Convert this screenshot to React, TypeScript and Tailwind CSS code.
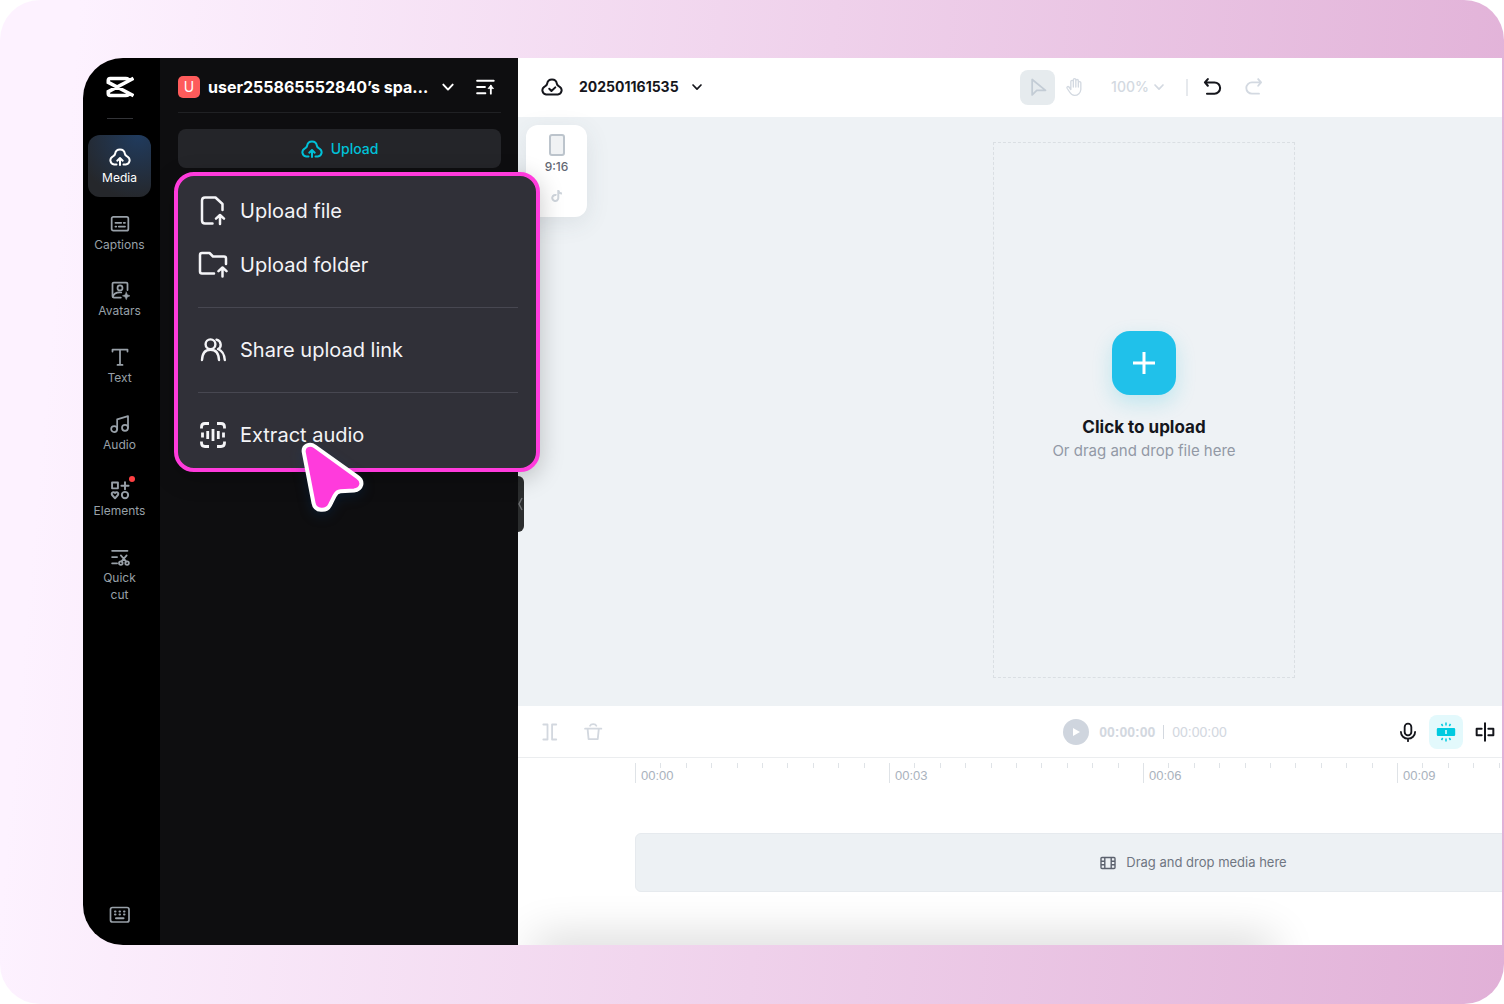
import type { ReactNode } from "react";

type IconProps = { className?: string };

function Stroke({ className = "size-5", box = 24, width = 2.1, children }: IconProps & { box?: number; width?: number; children: ReactNode }) {
  return (
    <svg
      aria-hidden="true"
      viewBox={`0 0 ${box} ${box}`}
      className={className}
      fill="none"
      stroke="currentColor"
      strokeWidth={width}
      strokeLinecap="round"
      strokeLinejoin="round"
    >
      {children}
    </svg>
  );
}

const CLOUD = "C4.6 10.7 6.6 10.6 6.7 8.3a5.4 5.4 0 0 1 10.6 0C17.4 10.6 19.4 10.7 20.4 11.8";

const CloudUpload = ({ className }: IconProps) => (
  <Stroke className={className} width={2.2}>
    <path d={`M8.2 20.2H5.6A4.6 4.6 0 0 1 3.6 11.8${CLOUD}A4.6 4.6 0 0 1 18.4 20.2H15.8`} />
    <path d="M12 20.8v-7.3M9 16l3-2.8 3 2.8" />
  </Stroke>
);

const CloudCheck = ({ className }: IconProps) => (
  <Stroke className={className} width={2.2}>
    <path d={`M5.6 20.2A4.6 4.6 0 0 1 3.6 11.8${CLOUD}A4.6 4.6 0 0 1 18.4 20.2Z`} />
    <path d="M9 14l2.4 2.4 4.2-4" />
  </Stroke>
);

const Captions = () => (
  <Stroke>
    <rect x="2" y="3.5" width="20" height="16.5" rx="2" />
    <path d="M6.5 10.5h7M16.5 10.5h1.5M6.5 15h1M10.5 15H18" />
  </Stroke>
);

const Avatars = () => (
  <Stroke>
    <path d="M21 12V4.5A1.5 1.5 0 0 0 19.5 3h-15A1.5 1.5 0 0 0 3 4.5v15A1.5 1.5 0 0 0 4.5 21H13" />
    <circle cx="12" cy="9.5" r="3" />
    <path d="M3.5 20c1-4 4.5-5.5 10-5" />
    <path d="M19.5 14.3l1.4 3.300 3.300 1.400-3.300 1.400-1.400 3.300-1.400-3.300-3.300-1.400 3.300-1.400z" fill="currentColor" strokeWidth=".5" />
  </Stroke>
);

const TextT = () => (
  <Stroke>
    <path d="M3 5.5V3h18v2.500M12 3v18.500M9 21.500h6" />
  </Stroke>
);

const Audio = () => (
  <Stroke>
    <circle cx="5" cy="18" r="3.6" />
    <circle cx="18" cy="16.5" r="3.6" />
    <path d="M8.6 18V6.500L21.600 2.500v14" />
  </Stroke>
);

const Elements = () => (
  <Stroke width={2.3}>
    <rect x="2.5" y="3" width="7" height="7" />
    <path d="M18 2.500v8.500M13.700 6.800h8.600" />
    <circle cx="18" cy="18" r="3.800" />
    <path d="M6 22l-3.500-4c-1.500-3 2-4.500 3.500-2.300 1.500-2.200 5-.7 3.500 2.300z" />
  </Stroke>
);

const QuickCut = () => (
  <Stroke>
    <path d="M2.500 4.500h18.500M2.500 12h6M2.500 19.500h6M13 10l6.500 7.500M20 10l-6.500 7.500" />
    <circle cx="13" cy="19.300" r="2.200" />
    <circle cx="20.500" cy="19.300" r="2.200" />
  </Stroke>
);

const Keyboard = () => (
  <Stroke className="size-6" width={1.7}>
    <rect x="2.500" y="4.500" width="18.500" height="14.500" rx="2" />
    <path d="M7 8.500h.5M11.500 8.500h.5M16 8.500h.5M7 11.500h.5M11.500 11.500h.5M16 11.500h.5M8 15.300h7.500" strokeWidth="2" />
  </Stroke>
);

const Chevron = ({ className = "size-3" }: IconProps) => (
  <Stroke className={className} box={12} width={1.7}>
    <path d="M2 4l4 4.200L10 4" />
  </Stroke>
);

const SortUp = () => (
  <Stroke width={2.2}>
    <path d="M2.500 4.500h20M2.500 12h9.500M2.500 19.500h10M19 20v-9.500" />
    <path d="M16 13.500l3-3.500 3 3.500z" fill="currentColor" strokeWidth="1" />
  </Stroke>
);

const Logo = () => (
  <svg aria-label="CapCut" role="img" viewBox="0 0 28 22" className="h-[22px] w-7" fill="none" stroke="white" strokeWidth="3.600">
    <path d="M27.500 2.200 22.500 5 2.300 15.700V17.500q0 2 2 2h15.500q3 0 3-2.800M27.500 19.800 22.500 17 2.300 6.300V4.500q0-2 2-2h15.500q3 0 3 2.800" />
  </svg>
);

const FileUp = () => (
  <Stroke className="size-[30px]" box={30} width={2.5}>
    <path d="M14.500 27.500H7q-3 0-3-3v-20q0-3 3-3h10.500l7 6.500V14" />
    <path d="M22 28v-8.500M18 22.700l4-3.700 4 3.700" />
  </Stroke>
);

const FolderUp = () => (
  <Stroke className="size-[30px]" box={30} width={2.5}>
    <path d="M16 23.500H4q-2 0-2-2V5q0-2 2-2h7.500l3.500 3.500h11q2 0 2 2V14" />
    <path d="M24.500 26.500V18M20.500 21.200l4-3.700 4 3.700" />
  </Stroke>
);

const Users = () => (
  <Stroke className="size-[30px]" box={30} width={2.4}>
    <circle cx="12.500" cy="9.300" r="4.900" />
    <path d="M4 25c.3-7 3.500-10.300 8.500-10.300S20.700 18 21 25M18.500 4.700c5.300 1.600 5.300 7.600 1.500 9.300 4 1.500 6.300 5 6.800 11" />
  </Stroke>
);

const ExtractAudio = () => (
  <Stroke className="size-[30px]" box={30} width={2.8}>
    <path d="M3.500 8.500V7q0-3.500 3.500-3.500h4M19 3.500h4q3.500 0 3.500 3.500v1.500M26.500 21.500v1.500q0 3.500-3.500 3.500h-4M11 26.500H7q-3.500 0-3.500-3.500v-1.500" strokeLinecap="butt" />
    <path d="M4.500 12.500v5M9.700 11v8M15 9v12M20.300 11v8M25.500 12.500v5" strokeLinecap="butt" />
  </Stroke>
);

const navItems: { label: string; icon: ReactNode; dot?: boolean }[] = [
  { label: "Media", icon: <CloudUpload className="size-[22px]" /> },
  { label: "Captions", icon: <Captions /> },
  { label: "Avatars", icon: <Avatars /> },
  { label: "Text", icon: <TextT /> },
  { label: "Audio", icon: <Audio /> },
  { label: "Elements", icon: <Elements />, dot: true },
  { label: "Quick cut", icon: <QuickCut /> },
];

function Sidebar() {
  return (
    <nav aria-label="Tools" className="flex w-[77px] shrink-0 flex-col items-center bg-black pt-[18px] pr-1 pb-[18px] text-[#98a0a8]">
      <Logo />
      <div className="mt-5 h-px w-[26px] bg-[#333438]" />
      <ul className="mt-4 flex h-[468px] flex-col justify-between">
        {navItems.map((item, i) => (
          <li key={item.label}>
            <button
              className={
                i === 0
                  ? "flex h-[62px] w-[63px] flex-col items-center rounded-xl bg-[radial-gradient(circle_at_80%_0%,#203b5e,#25272b_80%)] pt-[11px] text-white"
                  : "relative flex min-h-[62px] w-[63px] flex-col items-center pt-[11px]"
              }
            >
              <span className="flex h-[22px] items-center">{item.icon}</span>
              {item.dot && <span className="absolute top-2 right-4 size-1.5 rounded-full bg-[#ff4043]" />}
              <span className={item.label === "Quick cut" ? "mt-px w-10 text-xs leading-[17px]" : "mt-px text-xs leading-[18px]"}>{item.label}</span>
            </button>
          </li>
        ))}
      </ul>
      <button aria-label="Keyboard shortcuts" className="mt-auto">
        <Keyboard />
      </button>
    </nav>
  );
}

function MenuItem({ icon, children }: { icon: ReactNode; children: ReactNode }) {
  return (
    <button role="menuitem" className="flex h-[54px] w-full items-center gap-3 text-xl text-[#f4f4f7]">
      {icon}
      <span>{children}</span>
    </button>
  );
}

function UploadMenu() {
  return (
    <div role="menu" className="absolute top-[114px] left-[14px] z-20 w-[366px] rounded-[20px] border-4 border-[#ff3bdc] bg-[#303038] pt-2 pr-[18px] pb-1.5 pl-5 shadow-[0_6px_24px_rgba(0,0,0,0.22)]">
      <MenuItem icon={<FileUp />}>Upload file</MenuItem>
      <MenuItem icon={<FolderUp />}>Upload folder</MenuItem>
      <hr className="my-[15px] border-[#474751]" />
      <MenuItem icon={<Users />}>Share upload link</MenuItem>
      <hr className="my-[15px] border-[#474751]" />
      <MenuItem icon={<ExtractAudio />}>Extract audio</MenuItem>
      <svg aria-hidden="true" viewBox="0 0 66 76" className="absolute top-[264px] left-[122px] h-[76px] w-[66px] drop-shadow-[0_4px_6px_rgba(0,60,120,0.25)]">
        <path
          d="M15 6.500C9.500 2.500 2.600 6 3.800 12.500L13.500 63C15 71.500 26.500 72 30 65L34.500 56C36 53 37.500 51.500 40.500 51.300L54 50.500C62 49.500 64 41.500 57.500 37Z"
          fill="#ff3bdc"
          stroke="white"
          strokeWidth="4"
          strokeLinejoin="round"
        />
      </svg>
    </div>
  );
}

function MediaPanel() {
  return (
    <section aria-label="Media" className="relative z-10 w-[358px] shrink-0 bg-[#0e0e10] pr-[17px] pl-[18px] text-white">
      <header className="flex h-[55px] items-center border-b border-[#202124] pt-[3px]">
        <button className="flex min-w-0 flex-1 items-center gap-2">
          <span className="flex h-[22px] w-[22px] shrink-0 items-center justify-center rounded-[5px] bg-[#fe5b5b] text-sm">U</span>
          <span className="w-[222px] truncate text-left text-base font-bold">user255865552840’s space</span>
          <Chevron className="ml-[3px] size-3.5" />
        </button>
        <button aria-label="Sort" className="mr-1.5">
          <SortUp />
        </button>
      </header>
      <button className="mt-4 flex h-[39px] w-full items-center justify-center gap-2 rounded-lg bg-[#242529] text-sm font-medium text-[#00c1d8]">
        <CloudUpload className="size-[22px]" />
        Upload
      </button>
      <UploadMenu />
      <button aria-label="Collapse panel" className="absolute top-[418px] -right-1.5 flex h-14 w-1.5 items-center justify-center rounded-r-lg bg-[#2b2d2e] text-[#6c6e70]">
        <svg aria-hidden="true" viewBox="0 0 6 14" className="h-3.5 w-1.5 shrink-0" fill="none" stroke="currentColor" strokeWidth="1.500">
          <path d="M4 1 1 7l3 6" />
        </svg>
      </button>
    </section>
  );
}

function TopBar() {
  return (
    <header className="grid h-[59px] shrink-0 grid-cols-[1fr_auto_1fr] items-center bg-white pb-px text-[#15161c]">
      <div className="flex items-center gap-4 pl-[23px]">
        <CloudCheck className="size-[22px]" />
        <button className="flex items-center gap-3 text-sm font-bold">
          202501161535
          <Chevron />
        </button>
      </div>
      <div className="flex items-center pr-1 text-[#d3d9e1]">
        <button aria-label="Select" className="flex size-[35px] items-center justify-center rounded-lg bg-[#e6ebee] text-[#c3ccd5]">
          <Stroke>
            <path d="M5 3v18.500l5.500-5.500h10.500z" />
          </Stroke>
        </button>
        <button aria-label="Pan" className="ml-2.5">
          <Stroke width={1.6}>
            <path d="M7 15V5.500a1.500 1.500 0 0 1 3 0V12V3.500a1.500 1.500 0 0 1 3 0V12V4.500a1.500 1.500 0 0 1 3 0V12V7a1.500 1.500 0 0 1 3 0v8a7.500 7.500 0 0 1-7.500 7c-3 0-4.500-1.500-6-4l-3-4.500c-.8-1.500 1-2.800 2.300-1.500L7 15" />
          </Stroke>
        </button>
        <button className="ml-[26px] flex items-center gap-1 text-sm font-medium">
          100%
          <Chevron />
        </button>
        <span className="ml-[21px] h-[17px] w-0.5 bg-[#e6e9ed]" />
        <button aria-label="Undo" className="ml-3.5 text-[#15161c]">
          <Stroke width={2.5}>
            <path d="M7 2.500 3.500 6.500l3.500 4M4 6.500h11a6.700 6.700 0 0 1 0 13.500H6" />
          </Stroke>
        </button>
        <button aria-label="Redo" className="ml-[22px]">
          <Stroke width={2.2}>
            <path d="M17 2.500 20.500 6.500l-3.500 4M20 6.500H9.500a6.700 6.700 0 0 0 0 13.500H18" />
          </Stroke>
        </button>
      </div>
    </header>
  );
}

function Stage() {
  return (
    <div className="relative flex min-h-[588px] flex-1 justify-center bg-[#eef2f5] pt-[25px] pb-7">
      <button className="absolute top-2 left-2 flex h-[92px] w-[61px] flex-col items-center rounded-xl bg-white pt-[9px] text-[#626773] shadow-[0_6px_24px_rgba(60,80,90,0.10)]">
        <span className="h-[22px] w-4 rounded-[3px] border-2 border-[#bcc4cc] bg-[#f0f2f4]" />
        <span className="mt-[3px] text-xs leading-4 font-medium">9:16</span>
        <svg aria-hidden="true" viewBox="0 0 12 14" className="mt-[14px] h-3.5 w-3" fill="none" stroke="#cfd5dc" strokeWidth="2">
          <path d="M5.500 6.200a3 3 0 1 0 1.800 3V1M7.300 1.500c.4 2 1.700 3 3.700 3" />
        </svg>
      </button>
      <div className="flex w-[302px] flex-col items-center justify-center border border-dashed border-[#dadfe3] pb-[26px]">
        <button aria-label="Click to upload" className="flex size-16 items-center justify-center rounded-[18px] bg-[#20c1ea] text-white shadow-[0_8px_20px_rgba(32,193,220,0.22)]">
          <svg aria-hidden="true" viewBox="0 0 24 24" className="size-6" stroke="currentColor" strokeWidth="3">
            <path d="M12 1v22M1 12h22" />
          </svg>
        </button>
        <p className="mt-5 text-[17px] leading-6 font-bold text-[#15161c]">Click to upload</p>
        <p className="text-[15px] leading-6 text-[#9299a5]">Or drag and drop file here</p>
      </div>
    </div>
  );
}

function TimelineToolbar() {
  return (
    <div className="grid h-[52px] shrink-0 grid-cols-[1fr_auto_1fr] items-center border-b border-[#ebedef] text-[#d3d8df]">
      <div className="flex items-center gap-[23px] pl-[22px]">
        <button aria-label="Split">
          <Stroke width={2.2}>
            <path d="M4 3H9v18H4M19.500 3H14.500v18h5" />
          </Stroke>
        </button>
        <button aria-label="Delete">
          <Stroke width={2.2}>
            <path d="M2.500 8h19.500M5.500 8l1.200 12.500h11L19 8M8.500 4.500c1-2.500 6.500-2.500 7.500 0" />
          </Stroke>
        </button>
      </div>
      <div className="flex items-center pl-0.5 font-['Liberation_Sans',sans-serif] text-sm">
        <button aria-label="Play" className="flex size-[26px] items-center justify-center rounded-full bg-[#cfd5de]">
          <svg aria-hidden="true" viewBox="0 0 10 10" className="size-2.5 fill-white">
            <path d="M2 1l7 4-7 4z" />
          </svg>
        </button>
        <span className="ml-2.5 font-bold">00:00:00</span>
        <span className="mx-2 h-3.5 w-px bg-[#d3d8df]" />
        <span>00:00:00</span>
      </div>
      <div className="flex items-center justify-end pr-[275px] text-[#15161c]">
        <button aria-label="Record voice" className="mr-[11px]">
          <Stroke width={2.2}>
            <rect x="8" y="2" width="8" height="14" rx="4" />
            <path d="M3.500 12a8.500 8 0 0 0 17 0M12 20v3" />
          </Stroke>
        </button>
        <button aria-label="Magnet" className="mr-3 flex size-[34px] items-center justify-center rounded-lg bg-[#e3f9fc] text-[#00cae0]">
          <svg aria-hidden="true" viewBox="0 0 20 20" className="size-5" fill="none" stroke="currentColor" strokeWidth="1.500">
            <path fillRule="evenodd" fill="currentColor" stroke="none" d="M2 6h16a1.200 1.200 0 0 1 1.200 1.200v5.600a1.200 1.200 0 0 1-1.200 1.200H2a1.200 1.200 0 0 1-1.200-1.200V7.200A1.200 1.200 0 0 1 2 6zM9.200 8v4h1.600V8z" />
            <path d="M10 .5v3M10 16.500v3M5.500 2l1.200 2M14.500 2l-1.200 2M5.500 18l1.200-2M14.500 18l-1.200-2" />
          </svg>
        </button>
        <button aria-label="Preview axis">
          <Stroke width={2.4}>
            <path d="M12 1.500v21M8 8H2v8h6M16 8h6v8h-6" />
          </Stroke>
        </button>
      </div>
    </div>
  );
}

const marks = ["00:00", "00:03", "00:06", "00:09"];

function Timeline() {
  return (
    <section aria-label="Timeline" className="relative h-[239px] shrink-0 overflow-hidden bg-white">
      <TimelineToolbar />
      <div className="flex overflow-hidden pt-[5px] pl-[117px]">
        {marks.map((mark) => (
          <div key={mark} className="grid w-[254px] shrink-0 grid-cols-10">
            <span className="h-5 border-l border-[#dfe3e7] pt-1 pl-[5px] font-['Liberation_Sans',sans-serif] text-[13px] leading-[18px] whitespace-nowrap text-[#a9b2bd]">
              {mark}
            </span>
            {Array.from({ length: 9 }, (_, i) => (
              <span key={i} className="h-[5px] border-l border-[#dfe3e7]" />
            ))}
          </div>
        ))}
      </div>
      <div className="mt-[50px] mr-[18px] ml-[117px] flex h-[59px] items-center justify-center gap-2.5 rounded-md border border-[#e6eaee] bg-[#edf1f4] text-[13px] text-[#6f7682]">
        <svg aria-hidden="true" viewBox="0 0 16 14" className="h-3.5 w-4" fill="none" stroke="#5c626e" strokeWidth="1.400">
          <rect x="1" y="1.500" width="14" height="11" rx="1" />
          <path d="M4.800 1.500v11M11.200 1.500v11M1 5.200h3.800M1 8.800h3.800M11.200 5.200H15M11.200 8.800H15" />
        </svg>
        Drag and drop media here
      </div>
      <div className="absolute -bottom-5 left-6 h-5 w-[724px] shadow-[0_0_44px_8px_rgba(0,0,0,0.16)]" />
    </section>
  );
}

export default function App() {
  return (
    <div className="min-h-screen bg-white font-[Inter,sans-serif]">
      <div className="flex min-h-screen overflow-hidden rounded-[40px] bg-[linear-gradient(95deg,#fdf2ff_5%,#e1b0d7_100%)] pt-[58px] pr-0.5 pb-[59px] pl-[83px]">
        <div className="flex min-w-0 flex-1 overflow-hidden rounded-l-[40px]">
          <Sidebar />
          <MediaPanel />
          <main className="min-w-0 flex-1 overflow-hidden">
            <div className="flex h-full w-[calc(100%+268px)] flex-col">
              <TopBar />
              <Stage />
              <Timeline />
            </div>
          </main>
        </div>
      </div>
    </div>
  );
}
